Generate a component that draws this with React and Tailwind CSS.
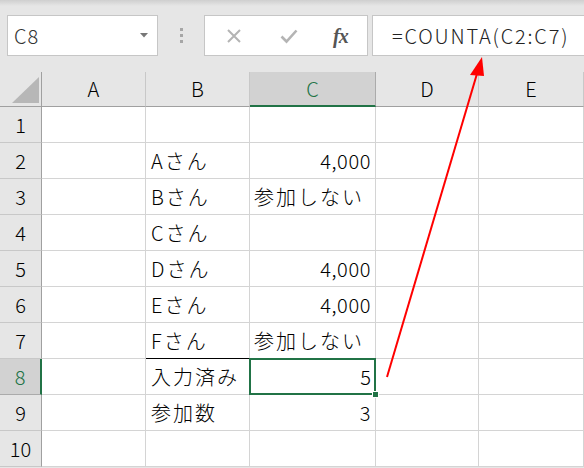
import React from "react";

const letters = ["A", "B", "C", "D", "E"];

const data = {
  2: ["", "Aさん", "4,000"],
  3: ["", "Bさん", "参加しない"],
  4: ["", "Cさん", ""],
  5: ["", "Dさん", "4,000"],
  6: ["", "Eさん", "4,000"],
  7: ["", "Fさん", "参加しない"],
  8: ["", "入力済み", "5"],
  9: ["", "参加数", "3"],
};

const isNum = (v) => /^[0-9,]+$/.test(v);

export default function App() {
  const rows = [1, 2, 3, 4, 5, 6, 7, 8, 9, 10];
  return (
    <div className="relative w-[584px] h-[468px] overflow-hidden bg-[#e6e6e6] text-black font-['Noto_Sans_CJK_JP','Noto_Sans',sans-serif]">
      {/* toolbar */}
      <div className="h-[72px] bg-[linear-gradient(#cfcfcf,#e6e6e6_6px)] flex items-start pt-[15px] pl-[7px]">
        <div className="w-[151px] h-[41px] shrink-0 bg-white border border-[#c6c6c6] flex items-center justify-between pl-[6px] pr-[9px]">
          <span className="text-[20px] text-[#333] leading-none font-light tracking-[1px]">C8</span>
          <svg width="8" height="5" viewBox="0 0 8 5">
            <polygon points="0,0 8,0 4,4.5" fill="#777" />
          </svg>
        </div>
        <div className="w-[46px] h-[41px] shrink-0 flex flex-col items-center justify-center gap-[3px]">
          <div className="w-[3px] h-[3px] bg-[#a6a6a6]" />
          <div className="w-[3px] h-[3px] bg-[#a6a6a6]" />
          <div className="w-[3px] h-[3px] bg-[#a6a6a6]" />
        </div>
        <div className="w-[164px] h-[41px] shrink-0 bg-white border border-[#c6c6c6] flex items-center">
          <svg className="ml-[21px]" width="16" height="16" viewBox="0 0 16 16">
            <path d="M2 2 L14 14 M14 2 L2 14" stroke="#b4b4b4" strokeWidth="2" fill="none" />
          </svg>
          <svg className="ml-[38px]" width="18" height="16" viewBox="0 0 18 16">
            <path d="M1.5 8.5 L6.5 13.5 L16.5 2.5" stroke="#b4b4b4" strokeWidth="2.6" fill="none" />
          </svg>
          <span className="ml-[35px] text-[20px] italic font-bold text-[#555] font-['Liberation_Serif',serif] leading-none tracking-[-1px]">fx</span>
        </div>
        <div className="ml-[4px] w-[240px] h-[41px] shrink-0 bg-white border border-[#c6c6c6] flex items-center pl-[19px]">
          <span className="text-[20px] leading-none text-[#222] font-light tracking-[1.8px]">=COUNTA(C2:C7)</span>
        </div>
      </div>

      {/* grid */}
      <div className="grid grid-cols-[42px_104px_104px_126px_103px_105px] grid-rows-[35px_repeat(10,36px)] font-light">
        {/* header row */}
        <div className="relative bg-[#e6e6e6] border-r border-b border-[#a0a0a0]">
          <svg className="absolute left-[12px] top-[5px]" width="27" height="26" viewBox="0 0 27 26">
            <polygon points="27,0 27,26 0,26" fill="#b7b7b7" />
          </svg>
        </div>
        {letters.map((l, i) => (
          <div
            key={l}
            className={
              i === 2
                ? "bg-[#d2d2d2] border-r border-[#ababab] border-b-2 border-b-[#217346] flex items-center justify-center text-[20px] text-[#217346]"
                : "bg-[#e6e6e6] border-r border-[#c8c8c8] border-b border-b-[#a0a0a0] flex items-center justify-center text-[20px]"
            }
          >
            {l}
          </div>
        ))}

        {rows.map((r) => {
          const vals = data[r] || ["", "", ""];
          return (
            <React.Fragment key={r}>
              <div
                className={
                  r === 8
                    ? "bg-[#d2d2d2] border-r-2 border-r-[#217346] border-b border-[#ababab] flex items-center justify-center text-[20px] text-[#217346]"
                    : "bg-[#e6e6e6] border-r border-r-[#a0a0a0] border-b border-[#c8c8c8] flex items-center justify-center text-[20px]"
                }
              >
                {r}
              </div>
              {/* A */}
              <div className="bg-white border-r border-b border-[#d4d4d4]" />
              {/* B */}
              <div
                className={
                  "bg-white border-r border-[#d4d4d4] flex items-center pl-[5px] text-[20px] whitespace-nowrap tracking-[2px] " +
                  (r === 7 ? "border-b border-b-black" : "border-b")
                }
              >
                {vals[1]}
              </div>
              {/* C */}
              {r === 8 ? (
                <div className="relative bg-white border-r border-b border-[#d4d4d4]">
                  <div className="absolute left-[-1px] top-[-1px] right-[-1px] bottom-[-1px] border-2 border-[#217346] flex items-center justify-end pr-[3px] text-[20px]">
                    {vals[2]}
                  </div>
                  <div className="absolute right-[-4px] bottom-[-4px] w-[7px] h-[7px] bg-[#217346] border border-white" />
                </div>
              ) : (
                <div
                  className={
                    "bg-white border-r border-b border-[#d4d4d4] flex items-center text-[20px] whitespace-nowrap " +
                    (isNum(vals[2]) ? "justify-end pr-[4px] tracking-[0.6px]" : "pl-[4px] tracking-[2px]")
                  }
                >
                  {vals[2]}
                </div>
              )}
              {/* D */}
              <div className="bg-white border-r border-b border-[#d4d4d4]" />
              {/* E */}
              <div className="bg-white border-r border-b border-[#d4d4d4]" />
            </React.Fragment>
          );
        })}
      </div>

      {/* red arrow */}
      <svg className="absolute left-0 top-0 pointer-events-none" width="584" height="468" viewBox="0 0 584 468">
        <line x1="387" y1="377" x2="477.5" y2="72" stroke="#ff0000" strokeWidth="2" />
        <polygon points="482,57 470,75 484,76" fill="#ff0000" />
      </svg>
    </div>
  );
}
